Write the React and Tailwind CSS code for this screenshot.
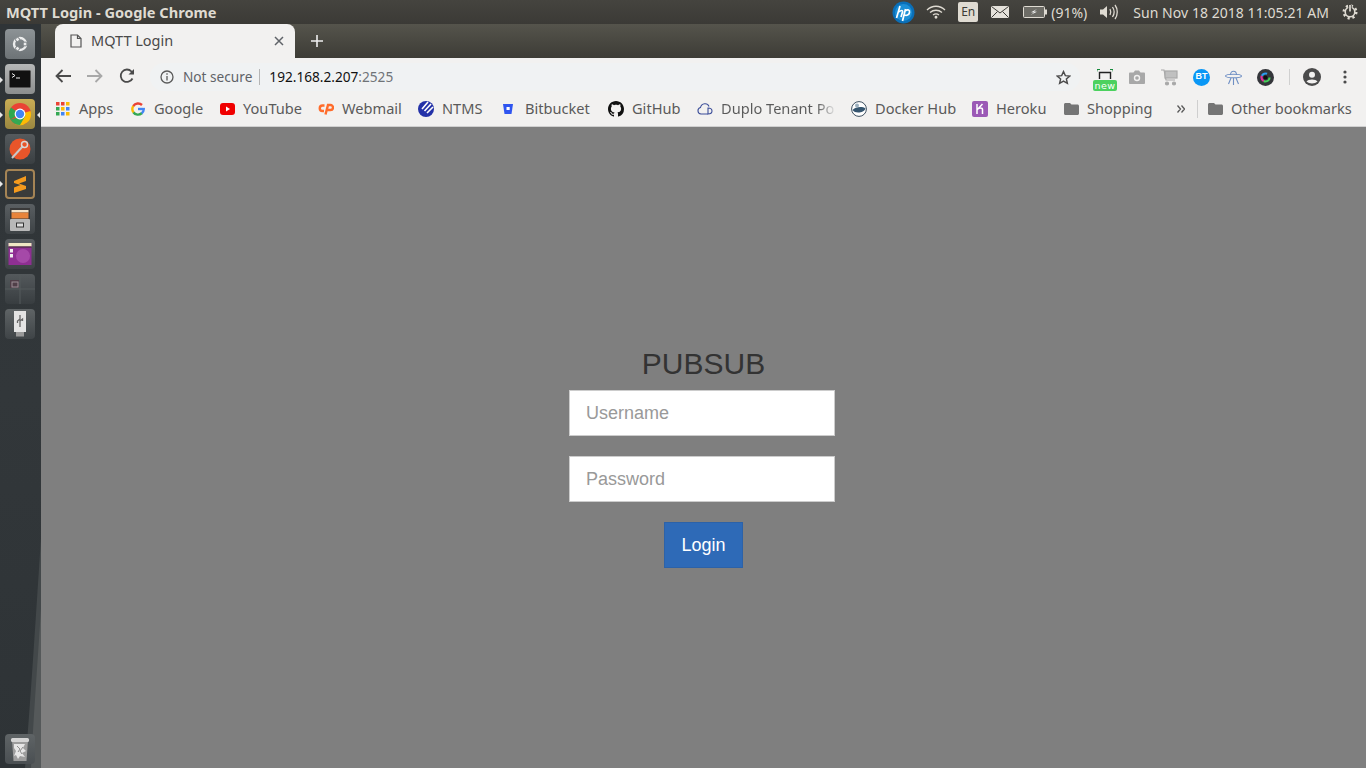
import React from "react";

const Tile = ({ className = "", children }) => (
  <div className={`relative w-[30px] h-[30px] rounded-[4px] flex items-center justify-center shrink-0 overflow-hidden ${className}`}>{children}</div>
);

const Pip = ({ side, top }) => (
  <svg className={`absolute ${side} ${top}`} width="3" height="6" viewBox="0 0 3 6" fill="#e8e8e8">
    <path d={side === "left-0" ? "M0 0L3 3L0 6Z" : "M3 0L0 3L3 6Z"} />
  </svg>
);

const Launcher = () => (
  <div className="relative w-[41px] shrink-0 flex flex-col items-start pl-[5px] pt-[5px] pb-[4px] gap-[5px] bg-gradient-to-b from-[#2f3437] via-[#32373a] to-[#2e3336] overflow-hidden">
    <svg className="absolute left-0 bottom-0 w-[41px] h-[230px]" viewBox="0 0 41 230" fill="none">
      <path d="M41 0V230H25C31 160 37 60 41 0Z" fill="#43484a" />
      <path d="M41 70V230H31C34 170 38 120 41 70Z" fill="#55595a" />
    </svg>
    <Pip side="left-0" top="top-[53px]" />
    <Pip side="left-0" top="top-[88px]" />
    <Pip side="right-[1px]" top="top-[88px]" />
    <Pip side="left-0" top="top-[157px]" />
    <Tile className="bg-gradient-to-b from-[#8d9396] to-[#6d7376]">
      <svg width="22" height="22" viewBox="0 0 22 22" fill="none">
        <circle cx="11" cy="11" r="6" stroke="#eceded" strokeWidth="2.400" />
        <circle cx="16" cy="11" r="2" fill="#eceded" stroke="#7d8386" />
        <circle cx="8.500" cy="6.500" r="2" fill="#eceded" stroke="#7d8386" />
        <circle cx="8.500" cy="15.500" r="2" fill="#eceded" stroke="#7d8386" />
      </svg>
    </Tile>
    <Tile className="bg-gradient-to-b from-[#b5b7b7] to-[#8c8e8e]">
      <svg width="22" height="20" viewBox="0 0 22 20" fill="none">
        <rect x="0.500" y="1.500" width="21" height="17" rx="1" fill="#111" stroke="#555" />
        <path d="M3 4.500L6 6.500L3 8.500" stroke="#eee" strokeWidth="1" />
        <path d="M7 9H11" stroke="#eee" strokeWidth="1" />
      </svg>
    </Tile>
    <Tile className="bg-gradient-to-b from-[#c9ad55] to-[#9b8740]">
      <svg width="24" height="24" viewBox="0 0 24 24">
        <circle cx="12" cy="12" r="11" fill="#ea4335" />
        <path d="M12 12L2.500 17.500A11 11 0 0 1 3 5.500Z" fill="#2fa84f" />
        <path d="M12 12L22.500 9A11 11 0 0 1 7 22Z" fill="#fbbc05" />
        <path d="M2.500 17.500A11 11 0 0 0 12 23L17.500 13.500Z" fill="#34a853" />
        <circle cx="12" cy="12" r="5.400" fill="#fff" />
        <circle cx="12" cy="12" r="4.200" fill="#4285f4" />
      </svg>
    </Tile>
    <Tile className="bg-gradient-to-b from-[#555a5d] to-[#3a3f42]">
      <svg width="26" height="26" viewBox="0 0 26 26" fill="none">
        <circle cx="13" cy="13" r="10.500" fill="#e8552a" />
        <path d="M5 22L16 10" stroke="#c9c9c9" strokeWidth="2" />
        <circle cx="17.500" cy="8.500" r="3" stroke="#d8d8d8" strokeWidth="1.500" />
      </svg>
    </Tile>
    <Tile className="bg-[#3a3b3a] border-2 border-[#a58455]">
      <svg width="16" height="20" viewBox="0 0 16 20">
        <path d="M2 7L14 2V7L7 9.500L14 12V15L2 19V13.500L8.500 11L2 9Z" fill="#f59a1d" />
      </svg>
    </Tile>
    <Tile className="bg-gradient-to-b from-[#5a5f62] to-[#3d4245]">
      <svg width="22" height="25" viewBox="0 0 22 25">
        <rect x="1" y="1" width="20" height="13" fill="#3a3a3a" />
        <rect x="2.500" y="3" width="17" height="2.500" fill="#f4e3c8" />
        <rect x="2.500" y="5.500" width="17" height="6" fill="#e8843a" />
        <rect x="1" y="12" width="20" height="12" rx="1" fill="#b8b8b8" />
        <rect x="7" y="15.500" width="8" height="5" fill="#333" />
        <rect x="8" y="16.500" width="6" height="3" fill="#ddd" />
      </svg>
    </Tile>
    <Tile className="bg-gradient-to-b from-[#5a5f62] to-[#3d4245]">
      <svg width="24" height="24" viewBox="0 0 24 24">
        <rect x="0.500" y="1" width="23" height="22" fill="#8e2f92" />
        <rect x="0.500" y="1" width="23" height="3.500" fill="#efe7c4" />
        <rect x="0.500" y="4.500" width="23" height="1" fill="#3a2f2f" />
        <circle cx="15" cy="14" r="7" fill="#a549a8" />
        <rect x="2" y="7" width="3" height="3.500" fill="#eee" />
        <rect x="2" y="12" width="3" height="3.500" fill="#eee" />
      </svg>
    </Tile>
    <Tile className="bg-gradient-to-b from-[#54595c] to-[#383d40]">
      <svg width="30" height="30" viewBox="0 0 30 30" fill="none">
        <path d="M15 0V30M0 15H30" stroke="#555a5c" strokeWidth="1" />
        <rect x="5" y="6" width="9" height="8" fill="#503f48" />
        <rect x="7" y="8" width="6" height="5" stroke="#9c8f96" strokeWidth="1" />
      </svg>
    </Tile>
    <Tile className="bg-gradient-to-b from-[#5f6466] to-[#3f4447]">
      <svg width="14" height="26" viewBox="0 0 14 26">
        <rect x="1" y="0" width="12" height="21" fill="#e4e4e4" />
        <rect x="3" y="21" width="8" height="4.500" fill="#999" />
        <path d="M7 4V16M7 8L4.500 10V12M7 10L9.500 8V10" stroke="#666" strokeWidth="1.300" fill="none" />
      </svg>
    </Tile>
    <Tile className="mt-auto bg-gradient-to-b from-[#5f6466] to-[#4a4f52]">
      <svg width="20" height="25" viewBox="0 0 20 25">
        <path d="M2 3H18L16.500 24H3.500Z" fill="#9d9d9d" />
        <rect x="1" y="1" width="18" height="4" rx="1.500" fill="#d5d5d5" />
        <path d="M4 7H15L13 11L16 14L12 16L15 20L10 19L8 22L6 18L4 19L6 14L4 11Z" fill="#e6e6e6" />
        <path d="M7 9L10 12L8 15M13 10L10 14L12 17" stroke="#8d8d8d" strokeWidth="1" fill="none" />
      </svg>
    </Tile>
  </div>
);

const TopBar = () => (
  <div className="h-[24px] shrink-0 flex items-center bg-gradient-to-b from-[#45443f] to-[#3b3a36] text-[#dfdbd2] font-['Noto_Sans',sans-serif] text-[14px]">
    <span className="ml-[6px] font-bold text-[14.600px] leading-[24px]">MQTT Login - Google Chrome</span>
    <div className="ml-auto flex items-center h-full">
      <svg className="mr-[11px]" width="23" height="23" viewBox="0 0 23 23">
        <circle cx="11.500" cy="11.500" r="11" fill="#0a6fb8" />
        <circle cx="11.500" cy="11.500" r="8.500" fill="#1c8fd6" />
        <path d="M8 5L4.500 17M7 11C9 9 11 9 10.500 11L9 16M13.500 8L10.500 20M13 10C16 8 18 9 17.500 11.500C17 14 14.500 15 12.500 14" stroke="#fff" strokeWidth="1.700" fill="none" />
      </svg>
      <svg className="mr-[12px]" width="20" height="14" viewBox="0 0 20 14" fill="none" stroke="#dfdbd2" strokeWidth="1.300">
        <path d="M1 5C6 0 14 0 19 5" />
        <path d="M4 7.500C7.500 4.500 12.500 4.500 16 7.500" />
        <path d="M7 10C9 8.500 11 8.500 13 10" />
        <circle cx="10" cy="12.300" r="0.800" fill="#dfdbd2" />
      </svg>
      <span className="w-[20px] h-[20px] mr-[13px] rounded-[2px] bg-[#dfdbd2] text-[#3c3b37] text-[12px] flex items-center justify-center">En</span>
      <svg className="mr-[14px]" width="18" height="12" viewBox="0 0 18 12">
        <rect x="0" y="0" width="18" height="12" rx="1" fill="#e4e1da" />
        <path d="M0.500 0.500L9 7L17.500 0.500M0.500 11.500L6.500 5.500M17.500 11.500L11.500 5.500" stroke="#3c3b37" strokeWidth="1" fill="none" />
      </svg>
      <svg width="24" height="12" viewBox="0 0 24 12">
        <rect x="0.500" y="0.500" width="21" height="11" rx="1" fill="#6d6c66" stroke="#dfdbd2" />
        <rect x="22" y="3.500" width="2" height="5" fill="#dfdbd2" />
        <path d="M14 3L8 6.200L11 6.500L7.500 9L14 5.800L11 5.500Z" fill="#eeeeee" />
      </svg>
      <span className="ml-[4px] mr-[12px]">(91%)</span>
      <svg className="mr-[14px]" width="20" height="16" viewBox="0 0 20 16" fill="none">
        <path d="M1 5.500H4L8 2V14L4 10.500H1Z" fill="#dfdbd2" />
        <path d="M11 5C12 7 12 9 11 11M13.500 3C15.500 6 15.500 10 13.500 13M16 1C19 5 19 11 16 15" stroke="#dfdbd2" strokeWidth="1.300" />
      </svg>
      <span className="mr-[13px] tracking-[0.05px]">Sun Nov 18 2018 11:05:21 AM</span>
      <svg className="mr-[8px]" width="16" height="16" viewBox="0 0 16 16" fill="none">
        <circle cx="8" cy="8" r="6.300" stroke="#dfdbd2" strokeWidth="2.400" strokeDasharray="2.200 2.750" />
        <circle cx="8" cy="8" r="4.800" stroke="#dfdbd2" strokeWidth="1.600" />
        <path d="M8 1V8" stroke="#3c3b37" strokeWidth="3.400" />
        <path d="M8 1V7.500" stroke="#dfdbd2" strokeWidth="1.700" />
      </svg>
    </div>
  </div>
);

const TabStrip = () => (
  <div className="h-[34px] shrink-0 flex bg-gradient-to-b from-[#55544c] to-[#3d3c36] pl-[14px]">
    <div className="w-[240px] h-[34px] rounded-t-[8px] bg-[#f2f1f0] flex items-center text-[#4a4a4a]">
      <svg className="ml-[15px]" width="12" height="14" viewBox="0 0 12 14" fill="none" stroke="#555" strokeWidth="1.200">
        <path d="M1 1H7.500L11 4.500V13H1Z" />
        <path d="M7.500 1V4.500H11" />
      </svg>
      <span className="ml-[9px] text-[14.500px]">MQTT Login</span>
      <svg className="ml-auto mr-[11px]" width="10" height="10" viewBox="0 0 10 10" stroke="#5f6368" strokeWidth="1.500">
        <path d="M1 1L9 9M9 1L1 9" />
      </svg>
    </div>
    <svg className="ml-[16px] mt-[11px]" width="12" height="12" viewBox="0 0 12 12" stroke="#eeeeee" strokeWidth="1.600">
      <path d="M6 0V12M0 6H12" />
    </svg>
  </div>
);

const ToolBar = () => (
  <div className="h-[36px] shrink-0 flex items-center bg-[#f2f1f0] text-[13.650px]">
    <svg className="ml-[14px]" width="16" height="14" viewBox="0 0 16 14" fill="none" stroke="#4b4b4b" strokeWidth="1.800">
      <path d="M16 7H2M7.500 1L1.500 7L7.500 13" />
    </svg>
    <svg className="ml-[16px]" width="16" height="14" viewBox="0 0 16 14" fill="none" stroke="#a8a8a8" strokeWidth="1.800">
      <path d="M0 7H14M8.500 1L14.500 7L8.500 13" />
    </svg>
    <svg className="ml-[16px]" width="16" height="16" viewBox="0 0 16 16" fill="none">
      <path d="M13.500 10.500A6.200 6.200 0 1 1 12.500 3.500L14.500 5.500" stroke="#4b4b4b" strokeWidth="1.800" />
      <path d="M15 1V6.500H9.500Z" fill="#4b4b4b" />
    </svg>
    <div className="ml-[15px] mt-[2px] w-[930px] h-[28px] rounded-full bg-[#f0f2f3] flex items-center">
      <svg className="ml-[10px]" width="14" height="14" viewBox="0 0 14 14" fill="none" stroke="#5a5a5a" strokeWidth="1.300">
        <circle cx="7" cy="7" r="6" />
        <path d="M7 6V10.500M7 3.300V4.800" />
      </svg>
      <span className="ml-[9px] text-[#5f6368]">Not secure</span>
      <span className="ml-[7px] w-px h-[16px] bg-[#b5b5b5]" />
      <span className="ml-[9px] text-[#111]">192.168.2.207<span className="text-[#6f7377]">:2525</span></span>
      <svg className="ml-auto mr-[9px]" width="15" height="15" viewBox="0 0 24 24" fill="none" stroke="#4b4b4b" strokeWidth="2.300">
        <path d="M12 2.500L14.900 9L22 9.700L16.600 14.400L18.200 21.400L12 17.800L5.800 21.400L7.400 14.400L2 9.700L9.100 9Z" />
      </svg>
    </div>
    <div className="relative ml-[13px] mt-[8px] w-[24px] h-[22px] shrink-0">
      <svg className="absolute left-[4px] top-0" width="16" height="11" viewBox="0 0 16 11" fill="none">
        <path d="M0 2.500V0.500H3M13 0.500H16V2.500" stroke="#168a3c" strokeWidth="1" />
        <path d="M2.500 10V3.500H13.500V10" stroke="#222" strokeWidth="1.400" />
      </svg>
      <span className="absolute left-0 top-[11px] w-[24px] h-[11px] rounded-[2px] bg-[#4cd15f] text-white text-[9.500px] tracking-[0.5px] leading-[11px] text-center font-['DejaVu_Sans',sans-serif]">new</span>
    </div>
    <svg className="ml-[12px] mt-[2px]" width="16" height="14" viewBox="0 0 16 14">
      <path d="M1 2.500H4.500L6 0.500H10L11.500 2.500H15C15.500 2.500 16 3 16 3.500V13C16 13.500 15.500 14 15 14H1C0.500 14 0 13.500 0 13V3.500C0 3 0.500 2.500 1 2.500Z" fill="#a8a8a8" />
      <circle cx="8" cy="8" r="3.200" fill="#f2f1f0" />
      <circle cx="8" cy="8" r="1.800" fill="#a8a8a8" />
    </svg>
    <svg className="ml-[16px] mt-[2px]" width="17" height="17" viewBox="0 0 17 17" fill="none" stroke="#a8a8a8" strokeWidth="1.200">
      <path d="M0 1H3L5 11H14" />
      <rect x="4" y="2" width="12" height="7" fill="#c0c0c0" />
      <circle cx="6" cy="14.500" r="1.500" fill="#a8a8a8" />
      <circle cx="13" cy="14.500" r="1.500" fill="#a8a8a8" />
    </svg>
    <span className="ml-[15px] mt-[2px] w-[17px] h-[17px] rounded-full bg-[#0a97f5] text-white text-[9px] font-bold flex items-center justify-center font-['Liberation_Sans',sans-serif]">BT</span>
    <svg className="ml-[15px] mt-[2px]" width="17" height="15" viewBox="0 0 17 15" fill="none" stroke="#6f8fc4" strokeWidth="1.100">
      <path d="M5.500 5C5.500 0 11.500 0 11.500 5" />
      <ellipse cx="8.500" cy="6" rx="8" ry="1.800" />
      <path d="M8.500 8V15M6 8L3.500 14M11 8L13.500 14" />
    </svg>
    <svg className="ml-[15px] mt-[2px]" width="17" height="17" viewBox="0 0 17 17">
      <circle cx="8.500" cy="8.500" r="8.500" fill="#34363a" />
      <circle cx="8.500" cy="8.500" r="4" fill="none" stroke="#44d05a" strokeWidth="2.200" strokeDasharray="8 20" />
      <circle cx="8.500" cy="8.500" r="4" fill="none" stroke="#e0309a" strokeWidth="2.200" strokeDasharray="6 20" strokeDashoffset="-8" />
      <circle cx="8.500" cy="8.500" r="4" fill="none" stroke="#2a9cf0" strokeWidth="2.200" strokeDasharray="6 20" strokeDashoffset="-14" />
      <circle cx="8.500" cy="8.500" r="2" fill="#111" />
    </svg>
    <span className="ml-[15px] mt-[2px] w-px h-[16px] bg-[#d0d0d0]" />
    <svg className="ml-[13px] mt-[2px]" width="18" height="18" viewBox="0 0 18 18">
      <circle cx="9" cy="9" r="9" fill="#4b4b4b" />
      <circle cx="9" cy="6.800" r="3" fill="#f2f1f0" />
      <path d="M3.500 13.500C5 10.800 13 10.800 14.500 13.500C12 16 6 16 3.500 13.500Z" fill="#f2f1f0" />
    </svg>
    <svg className="ml-[22px] mt-[2px]" width="4" height="14" viewBox="0 0 4 14" fill="#4b4b4b">
      <circle cx="2" cy="2" r="1.600" />
      <circle cx="2" cy="7" r="1.600" />
      <circle cx="2" cy="12" r="1.600" />
    </svg>
  </div>
);

const Folder = () => (
  <svg width="15" height="12" viewBox="0 0 15 12" fill="#757575">
    <path d="M1.500 0H6L7.500 1.500H13.500C14.300 1.500 15 2.200 15 3V10.500C15 11.300 14.300 12 13.500 12H1.500C0.700 12 0 11.300 0 10.500V1.500C0 0.700 0.700 0 1.500 0Z" />
  </svg>
);

const Bm = ({ w, icon = "w-[23px]", label, children, fade }) => (
  <div className={`${w} shrink-0 flex items-center whitespace-nowrap`}>
    <span className={`${icon} shrink-0 flex items-center`}>{children}</span>
    <span className={fade ? "bg-gradient-to-r from-[#5a5a5a] from-85% to-[#dddddd] bg-clip-text text-transparent" : ""}>{label}</span>
  </div>
);

const AppsIcon = () => (
  <svg width="14" height="14" viewBox="0 0 14 14">
    <rect x="0" y="0" width="3.500" height="3.500" fill="#ea4335" />
    <rect x="5" y="0" width="3.500" height="3.500" fill="#ea4335" />
    <rect x="10" y="0" width="3.500" height="3.500" fill="#fbbc05" />
    <rect x="0" y="5" width="3.500" height="3.500" fill="#34a853" />
    <rect x="5" y="5" width="3.500" height="3.500" fill="#fbbc05" />
    <rect x="10" y="5" width="3.500" height="3.500" fill="#4285f4" />
    <rect x="0" y="10" width="3.500" height="3.500" fill="#34a853" />
    <rect x="5" y="10" width="3.500" height="3.500" fill="#4285f4" />
    <rect x="10" y="10" width="3.500" height="3.500" fill="#fbbc05" />
  </svg>
);

const BookmarkBar = () => (
  <div className="h-[33px] shrink-0 flex items-center pl-[15px] pb-[2px] bg-[#f2f1f0] text-[#5a5a5a] text-[14.600px] border-b border-[#d0d0d0]">
    <Bm w="w-[75px]" label="Apps"><AppsIcon /></Bm>
    <Bm w="w-[89px]" label="Google">
      <svg width="14" height="14" viewBox="0 0 14 14" fill="none" strokeWidth="2.400">
        <path d="M12.700 7H7" stroke="#4285f4" />
        <path d="M12.700 6A5.800 5.800 0 0 1 10.500 11.500" stroke="#4285f4" />
        <path d="M10.700 11.300A5.800 5.800 0 0 1 2.300 10.200" stroke="#34a853" />
        <path d="M2.400 10.300A5.800 5.800 0 0 1 2.400 3.800" stroke="#fbbc05" />
        <path d="M2.300 4A5.800 5.800 0 0 1 11 3" stroke="#ea4335" />
      </svg>
    </Bm>
    <Bm w="w-[98px]" label="YouTube">
      <svg width="15" height="12" viewBox="0 0 15 12">
        <rect width="15" height="12" rx="3" fill="#f00000" />
        <path d="M6 3.500L10 6L6 8.500Z" fill="#fff" />
      </svg>
    </Bm>
    <Bm w="w-[100px]" icon="w-[24px]" label="Webmail">
      <svg width="16" height="12" viewBox="0 0 16 12" fill="none" stroke="#ff6c2c" strokeWidth="2.400">
        <path d="M6.500 2.500H4.500A2.700 2.700 0 0 0 4.500 8H6" />
        <path d="M7.500 11.500L10 2H12.500A2.500 2.500 0 0 1 12.500 7H9.500" />
      </svg>
    </Bm>
    <Bm w="w-[83px]" icon="w-[24px]" label="NTMS">
      <svg width="16" height="16" viewBox="0 0 16 16">
        <circle cx="8" cy="8" r="8" fill="#2432a8" />
        <path d="M4 8L10 1M6.500 10L13 3M9 12L15 6" stroke="#fff" strokeWidth="1.600" />
      </svg>
    </Bm>
    <Bm w="w-[107px]" icon="w-[24px]" label="Bitbucket">
      <svg width="14" height="14" viewBox="0 0 14 14">
        <path d="M2 2H12L10.500 12H3.500Z" fill="#2f55f0" />
        <rect x="5.500" y="5" width="3.200" height="3" fill="#fff" />
      </svg>
    </Bm>
    <Bm w="w-[89px]" icon="w-[24px]" label="GitHub">
      <svg width="16" height="16" viewBox="0 0 16 16" fill="#111">
        <path d="M8 0C3.580 0 0 3.580 0 8c0 3.540 2.290 6.530 5.470 7.590.4.070.55-.17.550-.38 0-.19-.01-.82-.01-1.490-2.010.370-2.530-.49-2.690-.94-.09-.23-.48-.94-.82-1.130-.28-.15-.68-.52-.01-.53.630-.01 1.080.58 1.230.82.720 1.210 1.870.87 2.330.66.070-.52.280-.87.510-1.070-1.780-.2-3.640-.89-3.640-3.950 0-.87.310-1.590.82-2.150-.08-.2-.36-1.020.08-2.120 0 0 .67-.21 2.200.82.640-.18 1.320-.27 2-.27s1.360.09 2 .27c1.530-1.040 2.200-.82 2.200-.82.440 1.100.16 1.920.08 2.120.51.560.82 1.270.82 2.150 0 3.070-1.870 3.750-3.650 3.950.29.250.54.730.54 1.480 0 1.070-.01 1.930-.01 2.200 0 .21.150.46.550.38A8.010 8.010 0 0 0 16 8c0-4.420-3.580-8-8-8z" />
      </svg>
    </Bm>
    <Bm w="w-[154px]" icon="w-[24px]" label="Duplo Tenant Po" fade>
      <svg width="16" height="13" viewBox="0 0 16 13" fill="none" stroke="#3d4f9a" strokeWidth="1.100">
        <path d="M11 12H4A3.300 3.300 0 0 1 3.500 5.500C4.500 1 10.500 0.500 12 4.500" />
        <path d="M11 6V12C13 12 15 11 15 9C15 7 13 6 11 6Z" />
      </svg>
    </Bm>
    <Bm w="w-[121px]" icon="w-[24px]" label="Docker Hub">
      <svg width="16" height="16" viewBox="0 0 16 16">
        <circle cx="8" cy="8" r="7.400" fill="#fff" stroke="#3d4f5f" />
        <path d="M1.500 9C4 6 11 5 14.500 7.500C13 12 4 13 1.500 9Z" fill="#35556f" />
        <circle cx="6" cy="4.500" r="2" fill="#9cb0bf" />
      </svg>
    </Bm>
    <Bm w="w-[92px]" icon="w-[24px]" label="Heroku">
      <svg width="16" height="16" viewBox="0 0 16 16">
        <rect width="16" height="16" rx="2" fill="#9b59b6" />
        <path d="M5 3V13M5 8.500C7 6.500 10.500 6.500 10.500 8.500V13M5 9L10.500 3" stroke="#fff" strokeWidth="1.500" fill="none" />
      </svg>
    </Bm>
    <Bm w="w-[113px]" label="Shopping"><Folder /></Bm>
    <svg width="8" height="8" viewBox="0 0 8 8" fill="none" stroke="#5a5a5a" strokeWidth="1.300">
      <path d="M0.500 0.500L3.500 4L0.500 7.500M4.500 0.500L7.500 4L4.500 7.500" />
    </svg>
    <span className="ml-[12px] w-px h-[18px] bg-[#cfcfcf]" />
    <div className="ml-[10px] flex items-center">
      <span className="w-[23px] flex items-center"><Folder /></span>
      <span className="whitespace-nowrap">Other bookmarks</span>
    </div>
  </div>
);

const Page = () => (
  <div className="flex-1 bg-[#7f7f7f] flex flex-col items-center pt-[220px] font-['Liberation_Sans',sans-serif]">
    <h2 className="text-[30px] leading-[33px] text-[#333] mb-[10px]">PUBSUB</h2>
    <input
      placeholder="Username"
      className="block w-[266px] h-[46px] mr-[3px] px-[16px] bg-white border border-[#ccc] text-[18px] text-[#555] placeholder:text-[#999] outline-none"
    />
    <input
      placeholder="Password"
      className="block mt-[20px] w-[266px] h-[46px] mr-[3px] px-[16px] bg-white border border-[#ccc] text-[18px] text-[#555] placeholder:text-[#999] outline-none"
    />
    <button className="mt-[20px] w-[79px] h-[46px] bg-[#2e6ab7] border border-[#2c62a8] text-white text-[18px]">Login</button>
  </div>
);

export default function App() {
  return (
    <div className="w-[1366px] h-[768px] flex flex-col overflow-hidden font-['Noto_Sans',sans-serif]">
      <TopBar />
      <div className="flex-1 flex min-h-0">
        <Launcher />
        <div className="flex-1 flex flex-col min-w-0">
          <TabStrip />
          <ToolBar />
          <BookmarkBar />
          <Page />
        </div>
      </div>
    </div>
  );
}
